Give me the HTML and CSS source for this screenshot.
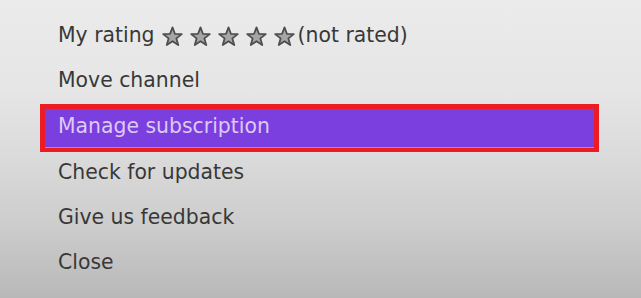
FILE: index.html
```html
<!DOCTYPE html>
<html>
<head>
<meta charset="utf-8">
<link rel="stylesheet" href="styles.css">
</head>
<body>
<ul class="menu">
  <li class="item rating">
    <span class="label">My rating</span>
    <span class="stars">
      <svg class="star" viewBox="0 0 20 20"><polygon points="10,1.3 12.29,7.44 18.84,7.73 13.71,11.81 15.47,18.12 10,14.5 4.53,18.12 6.29,11.81 1.16,7.73 7.71,7.44"/></svg>
      <svg class="star" viewBox="0 0 20 20"><polygon points="10,1.3 12.29,7.44 18.84,7.73 13.71,11.81 15.47,18.12 10,14.5 4.53,18.12 6.29,11.81 1.16,7.73 7.71,7.44"/></svg>
      <svg class="star" viewBox="0 0 20 20"><polygon points="10,1.3 12.29,7.44 18.84,7.73 13.71,11.81 15.47,18.12 10,14.5 4.53,18.12 6.29,11.81 1.16,7.73 7.71,7.44"/></svg>
      <svg class="star" viewBox="0 0 20 20"><polygon points="10,1.3 12.29,7.44 18.84,7.73 13.71,11.81 15.47,18.12 10,14.5 4.53,18.12 6.29,11.81 1.16,7.73 7.71,7.44"/></svg>
      <svg class="star" viewBox="0 0 20 20"><polygon points="10,1.3 12.29,7.44 18.84,7.73 13.71,11.81 15.47,18.12 10,14.5 4.53,18.12 6.29,11.81 1.16,7.73 7.71,7.44"/></svg>
    </span>
    <span class="label">(not rated)</span>
  </li>
  <li class="item">Move channel</li>
  <li class="item active">Manage subscription</li>
  <li class="item">Check for updates</li>
  <li class="item">Give us feedback</li>
  <li class="item">Close</li>
</ul>
</body>
</html>
```

FILE: styles.css
```css
html, body {
  margin: 0;
  padding: 0;
  height: 100%;
}

body {
  width: 641px;
  height: 298px;
  overflow: hidden;
  background: linear-gradient(to bottom, #ebebeb 0%, #e6e6e6 30%, #dcdcdc 50%, #cdcdcd 75%, #b8b8b8 100%);
  font-family: "DejaVu Sans", "Liberation Sans", sans-serif;
  font-size: 20.4px;
  color: #383838;
}

.menu {
  list-style: none;
  margin: 0;
  padding: 13px 0 0 0;
}

.item {
  box-sizing: border-box;
  margin-left: 40px;
  width: 559px;
  height: 45.3px;
  line-height: 45px;
  padding-left: 18px;
  white-space: nowrap;
}

.rating {
  display: flex;
  align-items: center;
}

.stars {
  display: flex;
  gap: 7px;
  margin-left: 7px;
  margin-right: 3px;
  margin-top: 1px;
}

.star {
  width: 21px;
  height: 21px;
  display: block;
}

.star polygon {
  fill: #a6a6a6;
  stroke: #4e4e4e;
  stroke-width: 1.7;
  stroke-linejoin: round;
}

.item.active {
  height: 48px;
  border: 5px solid #ec1c24;
  border-bottom-width: 4px;
  background: #7b3fe0;
  box-shadow: inset 0 -1px 0 rgba(200, 180, 240, 0.6);
  color: #dccaf2;
  line-height: 35px;
  padding-left: 13px;
  margin-bottom: -2px;
}
```
